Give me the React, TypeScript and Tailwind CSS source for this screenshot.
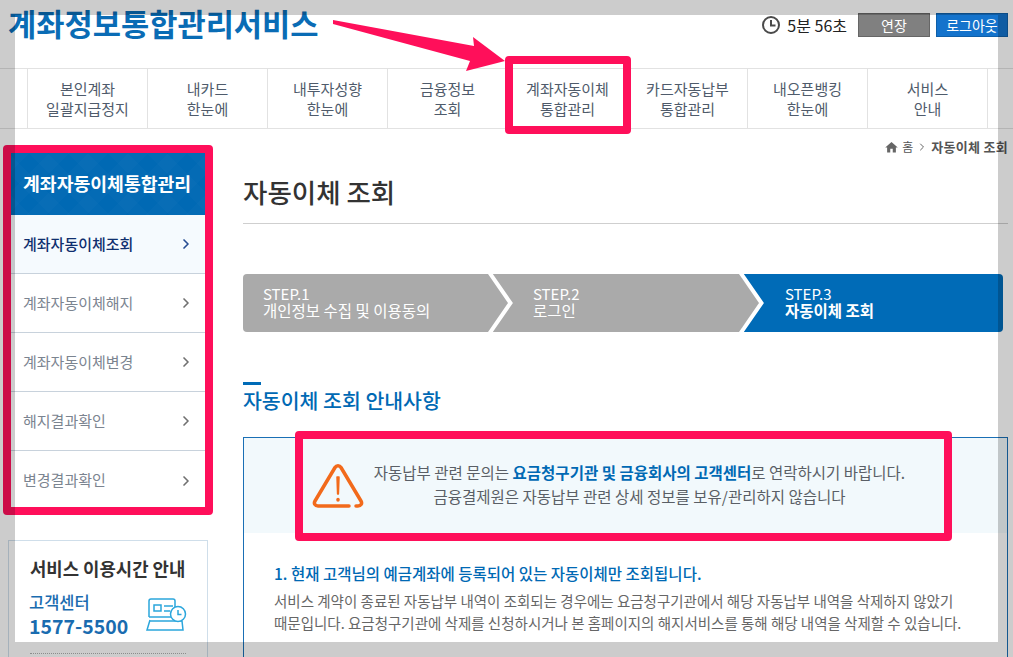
import { ChevronRight } from "lucide-react";
import { MdHome } from "react-icons/md";

const navItems = [
  ["본인계좌", "일괄지급정지"],
  ["내카드", "한눈에"],
  ["내투자성향", "한눈에"],
  ["금융정보", "조회"],
  ["계좌자동이체", "통합관리"],
  ["카드자동납부", "통합관리"],
  ["내오픈뱅킹", "한눈에"],
  ["서비스", "안내"],
];

const sideItems = ["계좌자동이체조회", "계좌자동이체해지", "계좌자동이체변경", "해지결과확인", "변경결과확인"];

function ClockIcon() {
  return (
    <svg width="20" height="20" viewBox="0 0 20 20" fill="none" stroke="#4a4a4a" strokeWidth="2">
      <circle cx="10" cy="10" r="8" />
      <path d="M10 5v5.5h4.5" />
    </svg>
  );
}

function StepChevron({ fill }: { fill: string }) {
  return (
    <svg width="26" height="58" viewBox="0 0 26 58" className="absolute top-0 -right-[23px] z-10">
      <path d="M0 0 L22 29 L0 58 Z" fill={fill} />
      <path d="M1 -2 L22.5 29 L1 60" fill="none" stroke="#fff" strokeWidth="4" />
    </svg>
  );
}

function Header() {
  return (
    <div className="flex h-[68px] items-start justify-between pl-2 pr-[5px]">
      <h1 className="text-[30.7px] leading-[46px] font-bold text-[#0a6cb5]">계좌정보통합관리서비스</h1>
      <div className="mt-[13px] flex items-center">
        <ClockIcon />
        <span className="ml-[6px] text-[16px] leading-6 text-[#222]">5분 56초</span>
        <button className="ml-[11px] h-6 w-[72px] border border-[#666] bg-[#808080] text-[14px] leading-[22px] text-white">연장</button>
        <button className="ml-[6px] h-6 w-[72px] border border-[#0f5fa8] bg-[#1473cc] text-[14px] leading-[22px] text-white">로그아웃</button>
      </div>
    </div>
  );
}

function Nav() {
  return (
    <div className="flex h-[61px] border-y border-[#e2e2e2] pl-[27px]">
      {navItems.map((item) => (
        <div key={item[0]} className="flex w-[120px] flex-col items-center justify-center border-l border-[#e2e2e2] text-[15px] leading-[20px] text-[#4f5b6b]">
          <span>{item[0]}</span>
          <span>{item[1]}</span>
        </div>
      ))}
      <div className="border-l border-[#e2e2e2]" />
    </div>
  );
}

function Sidebar() {
  return (
    <aside className="w-[200px] shrink-0">
      <div className="mx-[3px] mt-6">
        <div className="flex h-[62px] items-center bg-[#0069b4] bg-[repeating-linear-gradient(45deg,#ffffff04_0_14px,transparent_14px_28px),repeating-linear-gradient(-45deg,#ffffff04_0_14px,transparent_14px_28px)] pl-3 text-[18.3px] font-bold text-white">계좌자동이체통합관리</div>
        {sideItems.map((label, i) => (
          <div
            key={label}
            className={
              i === 0
                ? "flex h-[59px] items-center justify-between border-b border-[#c8d2dc] bg-[#f5fafe] pr-[11px] pl-3 text-[15px] font-medium text-[#0f2f6e]"
                : i === 4
                  ? "flex h-[59px] items-center justify-between pr-[11px] pl-3 text-[15px] text-[#7b8490]"
                  : "flex h-[59px] items-center justify-between border-b border-[#c8d2dc] pr-[11px] pl-3 text-[15px] text-[#7b8490]"
            }
          >
            <span>{label}</span>
            <ChevronRight size={16} strokeWidth={2.5} className={i === 0 ? "text-[#264c92]" : "text-[#707070]"} />
          </div>
        ))}
      </div>
      <div className="mt-[30px] border border-[#cfdeea] px-[21px] pt-[15px] pb-[12px]">
        <div className="text-[17.8px] leading-6 font-bold whitespace-nowrap text-[#333]">서비스 이용시간 안내</div>
        <div className="mt-[12px] flex items-center justify-between">
          <div className="-ml-[1px] whitespace-nowrap">
            <div className="text-[16.5px] leading-[21px] font-medium text-[#1a6cb0]">고객센터</div>
            <div className="text-[19.5px] leading-[25px] font-bold text-[#1a6cb0]">1577-5500</div>
          </div>
          <svg width="42" height="34" viewBox="0 0 42 34" fill="none" stroke="#2ba6dc" strokeWidth="1.5" className="-mr-[2px] shrink-0">
            <path d="M3 19V3a2 2 0 0 1 2-2h22a2 2 0 0 1 2 2v6" />
            <path d="M3 19h22" />
            <path d="M8 7h7v6H8zM18 8h9M18 13h6" />
            <path d="M4 22 1 32h36l-1-9H4" />
            <circle cx="32" cy="16" r="7.5" fill="#fff" />
            <path d="M32 12v4.5h3.5" />
          </svg>
        </div>
        <div className="mt-[15px] border-t border-dotted border-[#b0b0b0]" />
      </div>
    </aside>
  );
}

function Stepper() {
  return (
    <div className="mt-[50px] mr-[5px] flex h-[58px] text-[15px] leading-[17px] text-white">
      <div className="relative flex w-[248px] flex-col justify-center rounded-l-sm bg-[#aaaaaa] pb-[2px] pl-5">
        <span>STEP.1</span>
        <span className="text-[15.5px]">개인정보 수집 및 이용동의</span>
        <StepChevron fill="#aaaaaa" />
      </div>
      <div className="relative flex w-[251px] flex-col justify-center bg-[#aaaaaa] pb-[2px] pl-[42px]">
        <span>STEP.2</span>
        <span className="text-[15.5px]">로그인</span>
        <StepChevron fill="#aaaaaa" />
      </div>
      <div className="flex flex-1 flex-col justify-center rounded-r-sm bg-[#006bb7] pb-[2px] pl-[43px]">
        <span>STEP.3</span>
        <span className="text-[15.5px] font-bold">자동이체 조회</span>
      </div>
    </div>
  );
}

function Notice() {
  return (
    <div className="flex h-[95px] items-center justify-center gap-[10px] bg-[#f2f9fc] pr-[34px]">
      <svg width="52" height="46" viewBox="0 0 52 46" fill="none" stroke="#f26a1b" strokeWidth="3.5" strokeLinejoin="round" strokeLinecap="round" className="shrink-0">
        <path d="M37 43H6C3 43 1.500 40.500 3 38L23 4.500C24.500 2 27.500 2 29 4.500L49 38C50.500 40.500 49 43 46 43H44" />
        <path d="M25 14h2l-.6 17h-.8z" fill="#f26a1b" strokeWidth="1.500" />
        <path d="M26 36.500v.5" />
      </svg>
      <div className="-mt-1 text-center text-[15.5px] leading-6 whitespace-nowrap text-[#5a5f66]">
        <p>
          자동납부 관련 문의는 <b className="font-bold text-[#0069b4]">요금청구기관 및 금융회사의 고객센터</b>로 연락하시기 바랍니다.
        </p>
        <p>금융결제원은 자동납부 관련 상세 정보를 보유/관리하지 않습니다</p>
      </div>
    </div>
  );
}

function Main() {
  return (
    <main className="ml-[35px] flex-1 pr-[5px]">
      <div className="mt-[10px] flex h-4 items-center justify-end text-[12px] text-[#555]">
        <MdHome size={15} className="text-[#666]" />
        <span className="ml-[3px]">홈</span>
        <ChevronRight size={12} className="mx-[3px] text-[#666]" />
        <b className="text-[13px] font-bold tracking-[0.3px]">자동이체 조회</b>
      </div>
      <h2 className="mt-[19px] h-[50px] border-b border-[#cfcfcf] pb-[10px] text-[26.5px] leading-[36px] font-medium text-[#333]">자동이체 조회</h2>
      <Stepper />
      <div className="mt-[50px] h-[3px] w-[18px] bg-[#006bb7]" />
      <h3 className="text-[20.5px] leading-[30px] font-medium text-[#0069b4]">자동이체 조회 안내사항</h3>
      <div className="mt-[22px] h-[240px] border border-[#1a6fb5]">
        <Notice />
        <div className="px-[30px] pt-[29px]">
          <div className="text-[15.5px] leading-[22px] font-medium text-[#0069b4]">1. 현재 고객님의 예금계좌에 등록되어 있는 자동이체만 조회됩니다.</div>
          <p className="mt-[6px] text-[14.5px] leading-[22px] whitespace-nowrap text-[#666]">
            서비스 계약이 종료된 자동납부 내역이 조회되는 경우에는 요금청구기관에서 해당 자동납부 내역을 삭제하지 않았기
            <br />
            때문입니다. 요금청구기관에 삭제를 신청하시거나 본 홈페이지의 해지서비스를 통해 해당 내역을 삭제할 수 있습니다.
          </p>
        </div>
      </div>
    </main>
  );
}

function Annotations() {
  return (
    <>
      <svg width="1013" height="140" className="pointer-events-none absolute top-0 left-0">
        <polygon points="333,20 474,46 473,37 505,61 466,71 470,61 333,24" fill="#ff0f5a" />
      </svg>
      <div className="absolute top-[56px] left-[505px] h-[78px] w-[126px] rounded border-8 border-[#ff0f5a]" />
      <div className="absolute top-[145px] left-[3px] h-[370px] w-[210px] rounded border-8 border-[#ff0f5a]" />
      <div className="absolute top-[431px] left-[295px] h-[110px] w-[657px] rounded border-8 border-[#ff0f5a]" />
    </>
  );
}

function Frame() {
  return (
    <>
      <div className="absolute top-0 right-0 left-0 h-[15px] bg-black/20" />
      <div className="absolute top-[15px] bottom-[15px] left-0 w-[15px] bg-black/20" />
      <div className="absolute top-[15px] right-0 bottom-[15px] w-[15px] bg-black/20" />
      <div className="absolute right-0 bottom-0 left-0 h-[15px] bg-black/20" />
    </>
  );
}

export default function App() {
  return (
    <div className="relative h-[657px] w-[1013px] overflow-hidden bg-white font-['Noto_Sans_CJK_KR','Noto_Sans',sans-serif]">
      <Header />
      <Nav />
      <div className="flex pl-2">
        <Sidebar />
        <Main />
      </div>
      <Annotations />
      <Frame />
    </div>
  );
}
